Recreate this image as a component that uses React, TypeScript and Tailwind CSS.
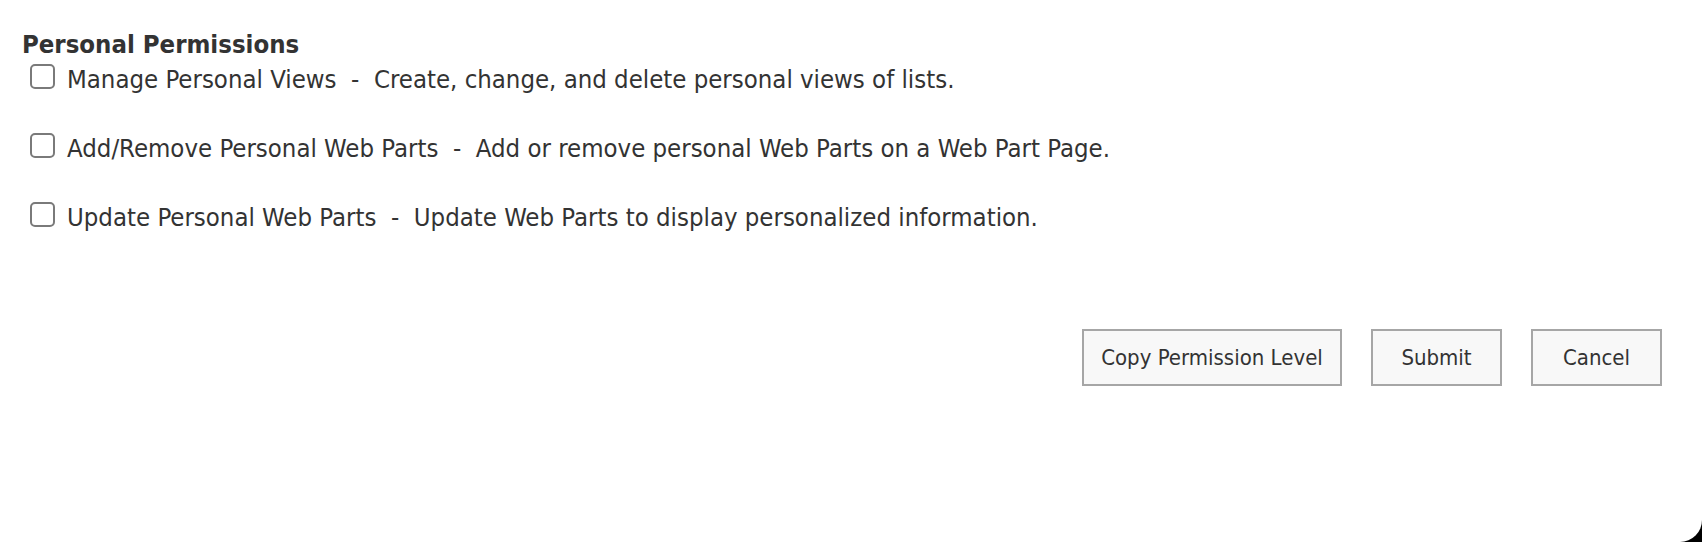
import React from "react";

const rows = [
  {
    name: "Manage Personal Views",
    desc: "Create, change, and delete personal views of lists.",
  },
  {
    name: "Add/Remove Personal Web Parts",
    desc: "Add or remove personal Web Parts on a Web Part Page.",
  },
  {
    name: "Update Personal Web Parts",
    desc: "Update Web Parts to display personalized information.",
  },
];

function Checkbox() {
  return (
    <span className="mt-0 ml-[8px] block h-[25px] w-[25px] shrink-0 rounded-[5px] border-2 border-[#7a7a7a] bg-white" />
  );
}

function Button({ label, className }: { label: string; className: string }) {
  return (
    <button
      type="button"
      className={
        "flex h-[57px] items-center justify-center border-2 border-[#a6a6a6] bg-[#f8f8f8] text-[22px] leading-none text-[#333333] " +
        className
      }
    >
      {label}
    </button>
  );
}

export default function App() {
  return (
    <div className="h-[542px] w-[1702px] bg-black">
      <div
        className="flex h-full w-full flex-col rounded-br-[22px] bg-white pt-[29px] pl-[22px] pr-[40px] text-[#333333]"
        style={{ fontFamily: "'DejaVu Sans Condensed', 'DejaVu Sans', sans-serif" }}
      >
        <div className="text-[25.5px] font-bold leading-[30px]">Personal Permissions</div>
        <div className="mt-[5px] flex flex-col gap-[39px]">
          {rows.map((r) => (
            <div key={r.name} className="flex items-start gap-[12px]">
              <Checkbox />
              <div className="whitespace-pre text-[25.5px] leading-[30px]">
                {r.name + "  -  " + r.desc}
              </div>
            </div>
          ))}
        </div>
        <div className="mt-[97px] flex justify-end gap-[29px]">
          <Button label="Copy Permission Level" className="w-[260px]" />
          <Button label="Submit" className="w-[131px]" />
          <Button label="Cancel" className="w-[131px]" />
        </div>
      </div>
    </div>
  );
}
